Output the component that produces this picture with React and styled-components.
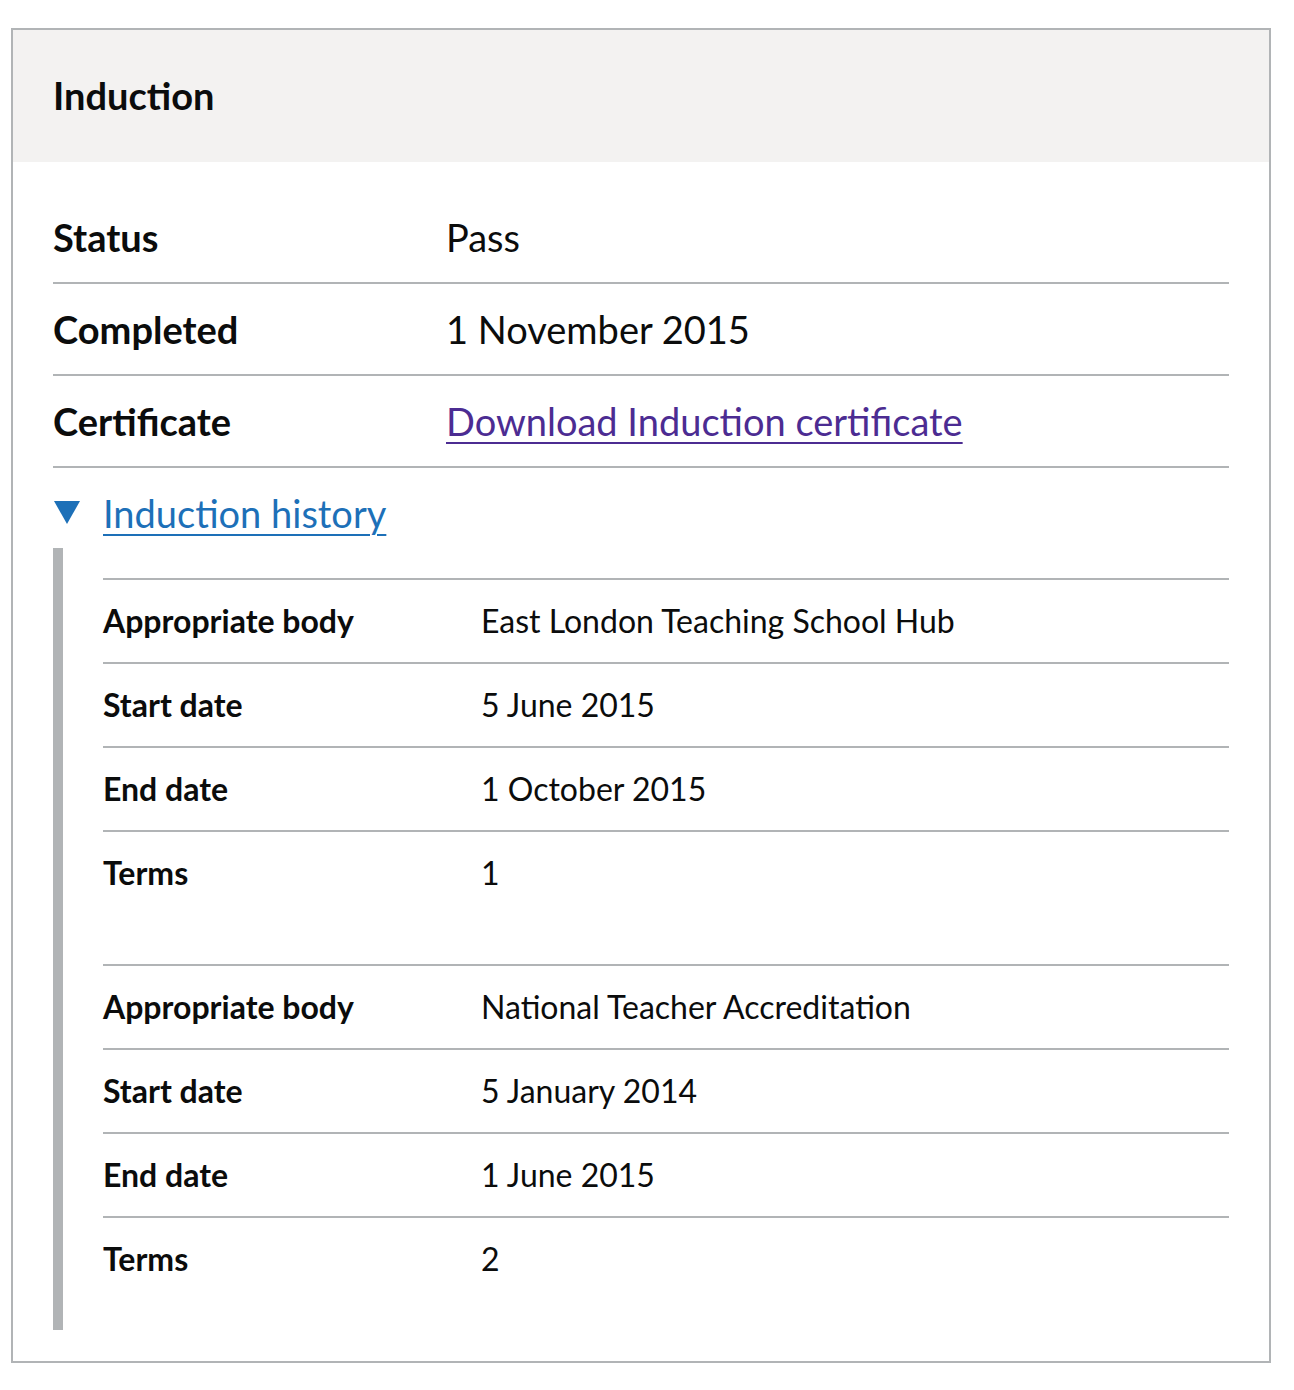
import React from "react";
import styled, { createGlobalStyle } from "styled-components";

const Global = createGlobalStyle`
  body {
    margin: 0;
    background: #fff;
    font-family: Lato, "Liberation Sans", Arial, sans-serif;
    color: #0b0c0c;
  }
`;

const induction = [
  { key: "Status", value: "Pass" },
  { key: "Completed", value: "1 November 2015" },
  {
    key: "Certificate",
    value: "Download Induction certificate",
    link: true,
  },
];

const history = [
  [
    { key: "Appropriate body", value: "East London Teaching School Hub" },
    { key: "Start date", value: "5 June 2015" },
    { key: "End date", value: "1 October 2015" },
    { key: "Terms", value: "1" },
  ],
  [
    { key: "Appropriate body", value: "National Teacher Accreditation" },
    { key: "Start date", value: "5 January 2014" },
    { key: "End date", value: "1 June 2015" },
    { key: "Terms", value: "2" },
  ],
];

const App = () => {
  return (
    <>
      <Global />
      <Card>
        <Header>
          <h2>Induction</h2>
        </Header>
        <Body>
          <List>
            {induction.map((row) => (
              <Row key={row.key}>
                <Key>{row.key}</Key>
                <Value>
                  {row.link ? <VisitedLink href="#">{row.value}</VisitedLink> : row.value}
                </Value>
              </Row>
            ))}
          </List>
          <Details open>
            <Summary>
              <Arrow />
              <SummaryText>Induction history</SummaryText>
            </Summary>
            <DetailsText>
              {history.map((group, i) => (
                <SmallList key={i}>
                  {group.map((row) => (
                    <SmallRow key={row.key}>
                      <SmallKey>{row.key}</SmallKey>
                      <SmallValue>{row.value}</SmallValue>
                    </SmallRow>
                  ))}
                </SmallList>
              ))}
            </DetailsText>
          </Details>
        </Body>
      </Card>
    </>
  );
};

const Card = styled.section`
  width: 1260px;
  margin: 28px 0 0 11px;
  box-sizing: border-box;
  border: 2px solid #b1b4b6;
`;

const Header = styled.div`
  background: #f3f2f1;
  padding: 40px 40px 42px;
  h2 {
    margin: 0;
    font-size: 38px;
    line-height: 50px;
    font-weight: 700;
  }
`;

const Body = styled.div`
  padding: 30px 40px 31px;
`;

const List = styled.dl`
  margin: 0;
`;

const Row = styled.div`
  display: grid;
  grid-template-columns: 393px 1fr;
  padding: 20px 0;
  border-bottom: 2px solid #b1b4b6;
  font-size: 38px;
  line-height: 50px;
`;

const Key = styled.dt`
  font-weight: 700;
`;

const Value = styled.dd`
  margin: 0;
`;

const VisitedLink = styled.a`
  color: #4c2c92;
  text-decoration: underline;
  text-decoration-thickness: 2px;
  text-underline-offset: 0.16em;
`;

const Details = styled.details`
  margin-top: 20px;
`;

const Summary = styled.summary`
  list-style: none;
  display: flex;
  align-items: center;
  cursor: pointer;
  margin-bottom: 10px;
  &::-webkit-details-marker {
    display: none;
  }
`;

const Arrow = styled.span`
  width: 0;
  height: 0;
  margin: 0 23px 2px 1px;
  border-left: 13.5px solid transparent;
  border-right: 13.5px solid transparent;
  border-top: 23px solid #1d70b8;
`;

const SummaryText = styled.span`
  color: #1d70b8;
  font-size: 38px;
  line-height: 50px;
  text-decoration: underline;
  text-decoration-thickness: 2px;
  text-underline-offset: 0.16em;
`;

const DetailsText = styled.div`
  border-left: 10px solid #b1b4b6;
  padding: 30px 0 30px 40px;
`;

const SmallList = styled.dl`
  margin: 0 0 50px;
  border-top: 2px solid #b1b4b6;
  &:last-child {
    margin-bottom: 0;
  }
`;

const SmallRow = styled.div`
  display: grid;
  grid-template-columns: 378px 1fr;
  padding: 20px 0;
  border-bottom: 2px solid #b1b4b6;
  font-size: 32px;
  line-height: 42px;
  &:last-child {
    border-bottom: none;
  }
`;

const SmallKey = styled.dt`
  font-weight: 700;
`;

const SmallValue = styled.dd`
  margin: 0;
`;

export default App;
